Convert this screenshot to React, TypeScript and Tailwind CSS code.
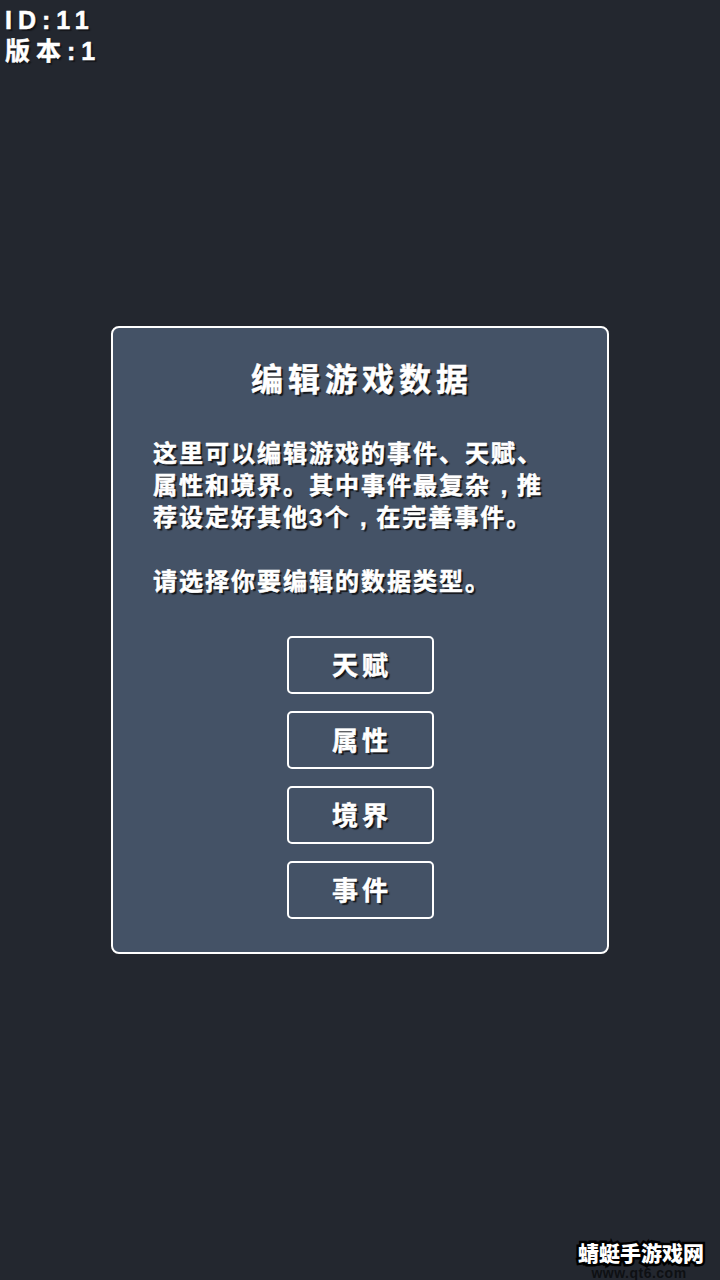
const cjk = "font-['Liberation_Sans','Noto_Sans_CJK_SC',sans-serif] font-bold";
const shadow = "[text-shadow:2px_2px_1px_#14161a] [-webkit-text-stroke:0.5px_#fff]";

const options = ["天赋", "属性", "境界", "事件"];

// the comma sits in the middle of its cell in the reference
const Comma = () => <span className="inline-block w-[26px] text-center tracking-normal">,</span>;

export default function App() {
  return (
    <div className={`relative flex h-[1280px] w-[720px] flex-col overflow-hidden bg-[#23272f] text-white ${cjk}`}>
      <div className={`h-[326px] pl-[5px] pt-[5px] text-[25px] leading-[31px] tracking-[6px] ${shadow}`}>
        <p>ID:11</p>
        <p>版本:1</p>
      </div>

      <div className="mx-auto flex h-[628px] w-[498px] flex-col items-center rounded-[8px] border-2 border-white bg-[#445266] px-10">
        <h1 className={`mt-[30px] pl-[4px] text-[32px] leading-[44px] tracking-[5px] ${shadow}`}>编辑游戏数据</h1>
        <div className={`mt-[36px] w-full text-[24px] leading-[32px] tracking-[2px] ${shadow}`}>
          <p>这里可以编辑游戏的事件、天赋、</p>
          <p>属性和境界。其中事件最复杂<Comma />推</p>
          <p>荐设定好其他3个<Comma />在完善事件。</p>
          <p className="mt-[32px]">请选择你要编辑的数据类型。</p>
        </div>
        <div className="mt-[38px] flex flex-col gap-[17px]">
          {options.map((item) => (
            <button
              key={item}
              className={`flex h-[58px] w-[147px] items-center justify-center rounded-[5px] border-2 border-white pt-[3px] pl-[4px] text-[26px] tracking-[4px] ${shadow}`}
            >
              {item}
            </button>
          ))}
        </div>
      </div>

      <div className="absolute right-[16px] top-[1241px] flex flex-col items-center">
        <span className="text-[21px] font-black leading-[26px] [-webkit-text-stroke:5px_#000] [paint-order:stroke_fill]">
          蜻蜓手游戏网
        </span>
        <span className="mr-[4px] font-['Liberation_Sans',sans-serif] text-[14px] font-bold leading-[12px] tracking-[0.5px] text-[#0e1013]">
          www.qt6.com
        </span>
      </div>
    </div>
  );
}
